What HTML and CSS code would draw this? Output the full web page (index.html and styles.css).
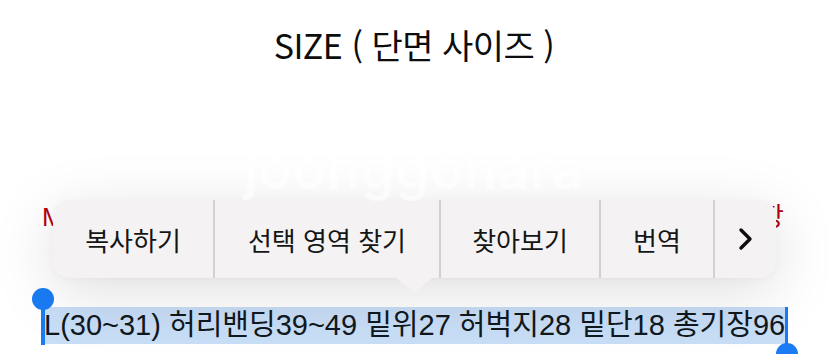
FILE: index.html
```html
<!DOCTYPE html>
<html lang="ko">
<head>
<meta charset="utf-8">
<link rel="stylesheet" href="styles.css">
</head>
<body>
<div class="page">
  <h1 class="title">SIZE ( 단면 사이즈 )</h1>
  <div class="stage">
    <div class="watermark">joonggonara</div>
    <div class="red-line">M(28~29) 허리밴딩37~47 밑위26 허벅지27 밑단17 총기장</div>
    <div class="menu">
      <div class="item">복사하기</div>
      <div class="item">선택 영역 찾기</div>
      <div class="item">찾아보기</div>
      <div class="item">번역</div>
      <div class="item more">
        <svg width="16" height="24" viewBox="0 0 16 24"><polyline points="3,3 12,12 3,21" fill="none" stroke="#0d0d0d" stroke-width="3.4" stroke-linecap="round" stroke-linejoin="round"/></svg>
      </div>
      <div class="tail"></div>
    </div>
  </div>
  <div class="sel-row">
    <span class="sel">L(30~31) 허리밴딩39~49 밑위27 허벅지28 밑단18 총기장96<span class="handle start"></span><span class="handle end"></span></span>
  </div>
</div>
</body>
</html>
```
FILE: styles.css
```css
html, body {
  margin: 0;
  padding: 0;
  background: #ffffff;
}
body {
  width: 828px;
  height: 354px;
  overflow: hidden;
  font-family: "Liberation Sans", "Noto Sans CJK KR", sans-serif;
}
.page {
  display: flex;
  flex-direction: column;
}
.title {
  margin: 0;
  box-sizing: border-box;
  height: 66px;
  padding-top: 22px;
  line-height: 46px;
  text-align: center;
  font-family: "Noto Sans CJK KR", sans-serif;
  font-weight: 400;
  font-size: 34px;
  letter-spacing: -0.5px;
  color: #0d0d0d;
}
.stage {
  position: relative;
  height: 241px;
}
.watermark {
  position: relative;
  z-index: 3;
  margin-top: 80px;
  height: 54px;
  line-height: 48px;
  text-align: center;
  font-family: "Inter", sans-serif;
  font-weight: 600;
  font-size: 54px;
  letter-spacing: 1px;
  color: rgba(255, 255, 255, 0.6);
}
.red-line {
  width: 742px;
  margin-left: 42px;
  line-height: 34px;
  font-size: 26px;
  color: #b5000f;
  text-align: justify;
  text-align-last: justify;
}
.menu {
  position: absolute;
  z-index: 2;
  left: 53px;
  top: 134px;
  width: 723px;
  height: 78px;
  display: flex;
  background: #f4f2f3;
  border-radius: 16px;
  box-shadow: 0 14px 64px rgba(0, 0, 0, 0.13), 0 2px 8px rgba(0, 0, 0, 0.03);
}
.item {
  display: flex;
  align-items: center;
  justify-content: center;
  font-family: "Noto Sans CJK KR", sans-serif;
  font-size: 26px;
  color: #151515;
  border-left: 2px solid #d2d0d1;
}
.item:nth-child(1) { width: 160px; border-left: none; }
.item:nth-child(2) { width: 224px; }
.item:nth-child(3) { width: 158px; }
.item:nth-child(4) { width: 112px; }
.item.more { flex: 1; }
.tail {
  position: absolute;
  left: 343px;
  top: 78px;
  width: 0;
  height: 0;
  border-left: 18px solid transparent;
  border-right: 18px solid transparent;
  border-top: 15px solid #f4f2f3;
}
.sel-row {
  padding-left: 44px;
  height: 47px;
}
.sel {
  position: relative;
  display: inline-block;
  height: 37px;
  line-height: 37px;
  background: #c8ddf6;
  font-size: 29px;
  color: #101820;
  padding-right: 1px;
}
.handle {
  position: absolute;
  width: 3.5px;
  background: #1a7cf4;
}
.handle.start {
  left: -3px;
  top: -8px;
  height: 46px;
}
.handle.start::before {
  content: "";
  position: absolute;
  left: -9px;
  top: -11px;
  width: 22px;
  height: 22px;
  border-radius: 50%;
  background: #1a7cf4;
}
.handle.end {
  right: -2px;
  top: 0;
  height: 46px;
}
.handle.end::after {
  content: "";
  position: absolute;
  left: -9px;
  top: 36px;
  width: 22px;
  height: 22px;
  border-radius: 50%;
  background: #1a7cf4;
}
```
